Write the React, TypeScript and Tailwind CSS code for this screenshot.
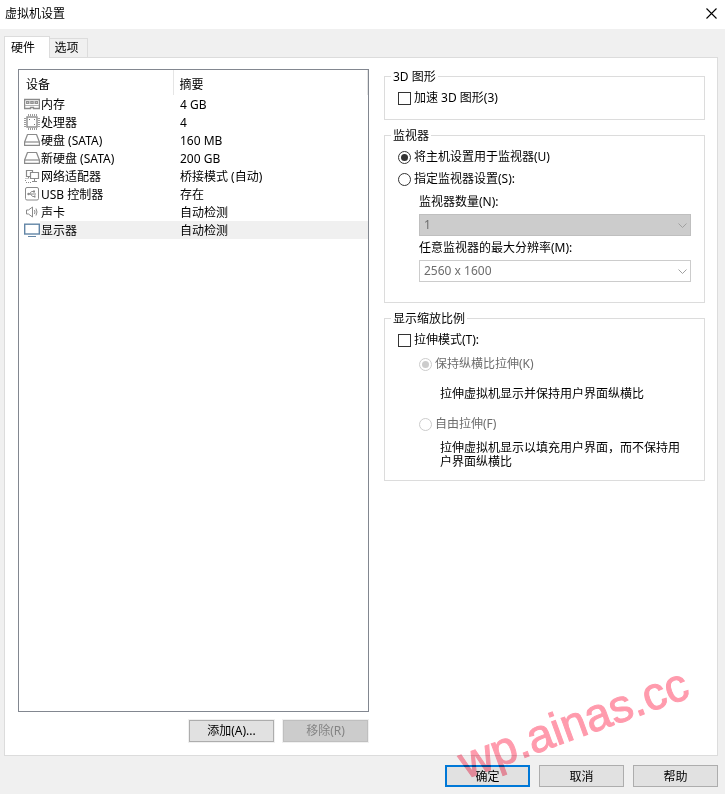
import { useState } from 'react'
import type { ReactNode } from 'react'

type Device = {
  name: string
  summary: string
  icon: ReactNode
}

const MemoryIcon = () => (
  <svg width="16" height="16" viewBox="0 0 16 16" fill="none" aria-hidden="true">
    <path d="M.6 3.500h14.800v9H9.500v-1h-3v1H.6z" stroke="#8a8a8a" strokeWidth="1.300" />
    <path d="M2 5h3.500v3H2zM6.200 5h3.600v3H6.200zM10.500 5H14v3h-3.500z" fill="#929292" />
    <path d="M1 9.500h14" stroke="#b4b4b4" />
    <path d="M3 6.500h1M7.500 6.500h1M12 6.500h1" stroke="#c8c8c8" />
  </svg>
)

const CpuIcon = () => (
  <svg width="16" height="16" viewBox="0 0 16 16" fill="none" stroke="#8a8a8a" aria-hidden="true">
    <rect x="3" y="3" width="10" height="10" strokeWidth="1.400" />
    <path
      d="M4.500 0v2M6.500 0v2M8.500 0v2M10.500 0v2M12.500 0v2M4.500 14v2M6.500 14v2M8.500 14v2M10.500 14v2M12.500 14v2"
      stroke="#9c9c9c"
    />
    <path
      d="M0 4.500h2M0 6.500h2M0 8.500h2M0 10.500h2M0 12.500h2M14 4.500h2M14 6.500h2M14 8.500h2M14 10.500h2M14 12.500h2"
      stroke="#9c9c9c"
    />
    <path d="M5 5.500h1M10 5.500h1M10 10.500h1" stroke="#777" />
  </svg>
)

const DiskIcon = () => (
  <svg
    width="16"
    height="16"
    viewBox="0 0 16 16"
    fill="none"
    stroke="#8a8a8a"
    strokeWidth="1.200"
    strokeLinejoin="round"
    aria-hidden="true"
  >
    <path d="M3.500 2.500h9l2.900 7.500v3.400H.6V10z" />
    <path d="M.6 10h14.800" />
  </svg>
)

const NetworkIcon = () => (
  <svg width="16" height="16" viewBox="0 0 16 16" fill="none" stroke="#8a8a8a" aria-hidden="true">
    <path d="M6 8.500H2.500v-6h6V4" strokeWidth="1.200" />
    <path d="M6.500 4.500h8v6h-8z" strokeWidth="1.200" />
    <path d="M10.500 11v2M8 13.500h5M4.500 9v1" />
    <path d="M1.500 10.500h4M1.500 12v2M2 14.500h6" strokeDasharray="1 1" />
  </svg>
)

const UsbIcon = () => (
  <svg width="16" height="16" viewBox="0 0 16 16" fill="none" stroke="#8a8a8a" aria-hidden="true">
    <rect x="1.500" y="1.500" width="13" height="12.500" rx="1.500" />
    <path d="M4 8h8M5.500 8l2-2.500h2M6.500 8l2 2.500h2" />
    <circle cx="4.500" cy="8" r="1.200" fill="#8a8a8a" stroke="none" />
    <path d="M9 4.500h2v2H9zM10 9.500h1.500v2H10z" fill="#8a8a8a" stroke="none" />
  </svg>
)

const SoundIcon = () => (
  <svg width="16" height="16" viewBox="0 0 16 16" fill="none" stroke="#8a8a8a" aria-hidden="true">
    <path d="M2.500 6h2L8.500 3v10l-4-3h-2z" />
    <path d="M10.500 6q1 2 0 4M12 4.500q2 3.500 0 7" />
  </svg>
)

const DisplayIcon = () => (
  <svg width="16" height="16" viewBox="0 0 16 16" fill="none" stroke="#6285a6" aria-hidden="true">
    <rect x=".7" y="2.200" width="14.600" height="9.800" fill="#fff" strokeWidth="1.400" />
    <path d="M4 14.500h8" />
  </svg>
)

const devices: Device[] = [
  { name: '内存', summary: '4 GB', icon: <MemoryIcon /> },
  { name: '处理器', summary: '4', icon: <CpuIcon /> },
  { name: '硬盘 (SATA)', summary: '160 MB', icon: <DiskIcon /> },
  { name: '新硬盘 (SATA)', summary: '200 GB', icon: <DiskIcon /> },
  { name: '网络适配器', summary: '桥接模式 (自动)', icon: <NetworkIcon /> },
  { name: 'USB 控制器', summary: '存在', icon: <UsbIcon /> },
  { name: '声卡', summary: '自动检测', icon: <SoundIcon /> },
  { name: '显示器', summary: '自动检测', icon: <DisplayIcon /> },
]

const buttonClass = 'h-[22px] w-[85px] border border-[#adadad] bg-[#e1e1e1] leading-4'

function Group({ title, children }: { title: string; children: ReactNode }) {
  return (
    <fieldset className="min-w-0 border border-[#dcdcdc] px-1.5">
      <legend className="px-0.5 leading-[15px]">{title}</legend>
      <div className="px-[7px] pt-[3px]">{children}</div>
    </fieldset>
  )
}

type ChoiceProps = {
  type: 'radio' | 'checkbox'
  name?: string
  label: string
  checked: boolean
  disabled?: boolean
  onChange?: () => void
}

function Choice({ type, name, label, checked, disabled, onChange }: ChoiceProps) {
  const shape = type === 'radio' ? 'rounded-full before:rounded-full' : ''

  return (
    <label className={`flex h-[22px] items-center gap-[3px] ${disabled ? 'text-[#6d6d6d]' : ''}`}>
      <input
        type={type}
        name={name}
        checked={checked}
        disabled={disabled}
        onChange={onChange ?? (() => {})}
        className={`grid size-[13px] shrink-0 appearance-none place-items-center border border-[#333] bg-white before:size-[7px] checked:before:bg-[#333] disabled:border-[#ccc] disabled:checked:before:bg-[#ccc] ${shape}`}
      />
      {label}
    </label>
  )
}

type DropDownProps = {
  id: string
  label: string
  value: string
  className: string
}

function DropDown({ id, label, value, className }: DropDownProps) {
  return (
    <div>
      <label htmlFor={id} className="flex h-6 items-center">
        {label}
      </label>
      <div className="relative">
        <select
          id={id}
          disabled
          className={`block h-[22px] w-full appearance-none border pl-1 text-[#6d6d6d] opacity-100 ${className}`}
        >
          <option>{value}</option>
        </select>
        <svg
          className="pointer-events-none absolute top-2 right-1"
          width="9"
          height="7"
          viewBox="0 0 9 7"
          fill="none"
          stroke="#a0a0a0"
          aria-hidden="true"
        >
          <path d="M.5 1.500l4 4 4-4" />
        </svg>
      </div>
    </div>
  )
}

export default function App() {
  const [selected, setSelected] = useState(7)
  const [accelerate, setAccelerate] = useState(false)
  const [useHost, setUseHost] = useState(true)
  const [stretch, setStretch] = useState(false)

  return (
    <div className="flex min-h-screen flex-col bg-[#f0f0f0] font-['Noto_Sans','Noto_Sans_CJK_SC',sans-serif] text-xs text-black">
      <header className="flex h-[29px] items-center justify-between bg-white pr-2 pb-0.5 pl-[5px]">
        <h1>虚拟机设置</h1>
        <button type="button" aria-label="关闭">
          <svg width="11" height="11" viewBox="0 0 11 11" stroke="#000" strokeWidth="1.100" aria-hidden="true">
            <path d="M.5.5l10 10M10.500.5l-10 10" />
          </svg>
        </button>
      </header>

      <main className="mr-[7px] ml-1 flex flex-1 flex-col pt-[7px]">
        <div role="tablist" className="flex items-end">
          <button
            type="button"
            role="tab"
            aria-selected="true"
            className="relative -mb-px h-[22px] w-[46px] border border-b-0 border-[#dcdcdc] bg-white pr-2"
          >
            硬件
          </button>
          <button
            type="button"
            role="tab"
            aria-selected="false"
            className="-ml-px h-[19px] w-[39px] border border-b-0 border-[#dcdcdc] pr-1"
          >
            选项
          </button>
        </div>

        <div className="flex flex-1 gap-[15px] border border-[#dcdcdc] bg-white pt-[11px] pr-3 pb-[13px] pl-[13px]">
          <section className="flex min-w-0 flex-1 flex-col">
            <div className="flex-1 border border-[#828790]">
              <table className="w-full table-fixed border-collapse">
                <thead>
                  <tr className="h-[25px] text-left">
                    <th className="w-[154px] border-r border-[#e5e5e5] pt-1 pl-[7px] font-normal">设备</th>
                    <th className="border-r border-[#e5e5e5] pt-1 pl-1.5 font-normal">摘要</th>
                  </tr>
                </thead>
                <tbody>
                  {devices.map((device, index) => {
                    const fill = index === selected ? 'bg-[#f0f0f0]' : ''
                    return (
                      <tr key={device.name} className="h-[18px] leading-4" onClick={() => setSelected(index)}>
                        <td className="p-0">
                          <div className="flex items-center pl-[5px]">
                            {device.icon}
                            <span className={`flex-1 pt-0.5 pl-px ${fill}`}>{device.name}</span>
                          </div>
                        </td>
                        <td className={`p-0 pt-0.5 pl-[7px] ${fill}`}>{device.summary}</td>
                      </tr>
                    )
                  })}
                </tbody>
              </table>
            </div>
            <div className="mt-2 flex justify-end gap-[9px] pr-px">
              <button type="button" className={`${buttonClass} ring-1 ring-[#f0f0f0]`}>
                添加(A)...
              </button>
              <button
                type="button"
                disabled
                className="h-[22px] w-[85px] border border-[#bfbfbf] bg-[#ccc] leading-4 text-[#838383] ring-1 ring-[#f0f0f0]"
              >
                移除(R)
              </button>
            </div>
          </section>

          <section className="flex w-[321px] flex-col gap-2">
            <Group title="3D 图形">
              <div className="pb-2.5">
                <Choice
                  type="checkbox"
                  label="加速 3D 图形(3)"
                  checked={accelerate}
                  onChange={() => setAccelerate(!accelerate)}
                />
              </div>
            </Group>

            <Group title="监视器">
              <div className="pb-5">
                <Choice
                  type="radio"
                  name="monitor"
                  label="将主机设置用于监视器(U)"
                  checked={useHost}
                  onChange={() => setUseHost(true)}
                />
                <Choice
                  type="radio"
                  name="monitor"
                  label="指定监视器设置(S):"
                  checked={!useHost}
                  onChange={() => setUseHost(false)}
                />
                <div className="pl-[21px]">
                  <DropDown id="count" label="监视器数量(N):" value="1" className="border-[#bfbfbf] bg-[#ccc]" />
                  <DropDown
                    id="resolution"
                    label="任意监视器的最大分辨率(M):"
                    value="2560 x 1600"
                    className="border-[#ccc] bg-white"
                  />
                </div>
              </div>
            </Group>

            <Group title="显示缩放比例">
              <div className="pb-[11px]">
                <Choice type="checkbox" label="拉伸模式(T):" checked={stretch} onChange={() => setStretch(!stretch)} />
                <div className="pt-0.5 pl-[21px]">
                  <Choice type="radio" name="stretch" label="保持纵横比拉伸(K)" checked disabled={!stretch} />
                  <p className="mt-3 mb-3 pl-[21px] leading-[14px]">拉伸虚拟机显示并保持用户界面纵横比</p>
                  <Choice type="radio" name="stretch" label="自由拉伸(F)" checked={false} disabled={!stretch} />
                  <p className="mt-1.5 pl-[21px] leading-[14px]">拉伸虚拟机显示以填充用户界面，而不保持用户界面纵横比</p>
                </div>
              </div>
            </Group>
          </section>
        </div>
      </main>

      <footer className="relative flex justify-end gap-[9px] pt-[9px] pr-[7px] pb-[7px]">
        <button type="button" className="h-[22px] w-[85px] border-2 border-[#0078d7] bg-[#e1e1e1] pt-0.5 leading-4">
          确定
        </button>
        <button type="button" className={`${buttonClass} pt-0.5`}>
          取消
        </button>
        <button type="button" className={`${buttonClass} pt-0.5`}>
          帮助
        </button>
        <div className="pointer-events-none absolute right-[19px] bottom-2 origin-[0_40px] -rotate-[20deg] font-['Liberation_Sans',sans-serif] text-[46px] leading-none text-[#ff9bad] mix-blend-multiply [-webkit-text-stroke:1px_#ff9bad]">
          wp.ainas.cc
        </div>
      </footer>
    </div>
  )
}
